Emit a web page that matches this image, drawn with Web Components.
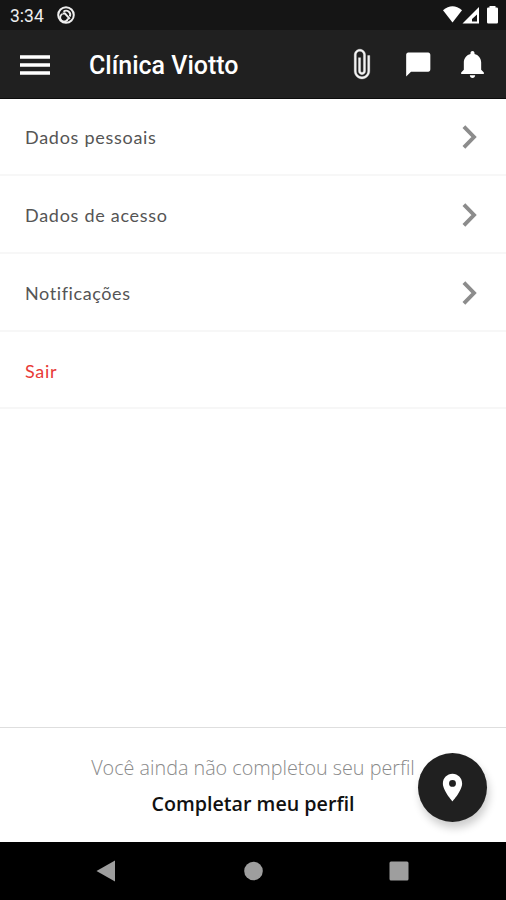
<!DOCTYPE html>
<html lang="pt-BR">
<head>
<meta charset="utf-8">
<title>Clínica Viotto</title>
<style>
  html, body {
    margin: 0;
    height: 100%;
    overflow: hidden;
  }
</style>
</head>
<body>
<profile-page></profile-page>
<script>
const define = (name, html) => {
  const template = document.createElement('template');
  template.innerHTML = html;
  window.customElements.define(name, class extends HTMLElement {
    constructor() {
      super();
      this.attachShadow({ mode: 'open' }).appendChild(template.content.cloneNode(true));
    }
  });
};

define('status-bar', `
<style>
  :host {
    display: flex;
    align-items: center;
    box-sizing: border-box;
    height: 30px;
    flex: none;
    padding: 0 8px 0 10px;
    background: #151515;
    color: #eee;
    font: 400 17.5px Roboto, sans-serif;
  }
  .time { flex: 1; display: flex; align-items: center; gap: 13px; }
  .time span { padding-top: 1px; }
  svg { display: block; }
</style>
<div class="time"><span>3:34</span>
  <svg width="18" height="18" viewBox="0 0 18 18" fill="none" stroke="#eee" stroke-width="2">
    <circle cx="9" cy="9" r="7.8"/>
    <path d="M5.200 8A4 4 0 1 0 11 12.500M6.500 5.800A4 4 0 0 1 12.800 10.500M5.500 7.500H8L12.800 12.800" stroke-width="1.900"/>
  </svg>
</div>
<svg width="55" height="18" viewBox="0 0 55 18" fill="#fff">
  <path d="M0 4.300Q9.500-4 19 4.300L9.500 16.500Z"/>
  <path fill-rule="evenodd" d="M19.500 17.500L36 1V17.500ZM29 15.500H34V8.500L29 13Z"/>
  <path d="M46.500 0h6v1.500h1.200A1.300 1.300 0 0 1 55 2.800v13.400a1.300 1.300 0 0 1-1.300 1.300h-8.400A1.300 1.300 0 0 1 44 16.200V2.800a1.300 1.300 0 0 1 1.300-1.300h1.200z"/>
</svg>`);

define('app-header', `
<style>
  :host {
    display: flex;
    align-items: center;
    box-sizing: border-box;
    height: 69px;
    flex: none;
    padding: 1px 17px 0 20px;
    background: #202020;
    color: #fff;
    border-bottom: 1px solid #0c0c0c;
  }
  h1 {
    flex: 1;
    margin: 0 0 0 39px;
    padding-top: 2px;
    font: 500 25px/30px Roboto, sans-serif;
  }
  svg { display: block; fill: #fff; }
  .actions { display: flex; align-items: center; gap: 23px; }
  .clip { margin: 0 2px 1px 0; stroke: #f2f2f2; stroke-width: 5; fill: #f2f2f2; }
</style>
<svg width="30" height="22" viewBox="0 0 30 22"><path d="M0 1.300h30v3.400H0zM0 9.300h30v3.400H0zM0 17.300h30v3.400H0z"/></svg>
<h1><slot></slot></h1>
<div class="actions">
  <svg class="clip" width="34" height="34" viewBox="0 0 512 512"><path d="M341.334 128v234.666C341.334 409.604 302.938 448 256 448c-46.937 0-85.333-38.396-85.333-85.334V117.334C170.667 87.469 194.135 64 224 64c29.864 0 53.333 23.469 53.333 53.334v245.333c0 11.729-9.605 21.333-21.334 21.333s-21.333-9.604-21.333-21.333V160h-32v202.667C202.667 392.531 226.135 416 256 416c29.865 0 53.334-23.469 53.334-53.333V117.334C309.334 70.401 270.938 32 224 32c-46.938 0-85.334 38.401-85.334 85.334v245.332C138.667 427.729 190.938 480 256 480c65.062 0 117.334-52.271 117.334-117.334V128h-32z"/></svg>
  <svg width="29" height="29" viewBox="0 0 24 24"><path d="M20 2H3.500C2.500 2 1.800 2.900 1.800 4v18l4-4H20c1.100 0 1.800-.9 1.800-2V4c0-1.100-.7-2-1.800-2z"/></svg>
  <svg width="33" height="33" viewBox="0 0 512 512"><path d="M256 464c22.779 0 41.411-18.719 41.411-41.600h-82.823c0 22.881 18.633 41.600 41.412 41.600zm134.589-124.800V224.800c0-63.440-44.516-117.518-103.530-131.041V79.200c0-17.682-14.078-31.200-31.059-31.200s-31.059 13.518-31.059 31.200v14.559c-59.015 13.523-103.530 67.601-103.530 131.041v114.400L80 380.800v20.800h352v-20.800l-41.411-41.600z"/></svg>
</div>`);

define('menu-item', `
<style>
  :host {
    display: flex;
    align-items: center;
    justify-content: space-between;
    box-sizing: border-box;
    height: 78px;
    padding: 2px 29px 0 25px;
    border-bottom: 2px solid #f7f7f7;
    color: #555;
    font: 400 18px/24px Lato, sans-serif;
    letter-spacing: var(--spacing, .72px);
  }
  :host(:first-child) { height: 77px; padding-top: 1px; }
  :host([danger]) { color: #e83a37; height: 77px; }
  :host([danger]) svg { display: none; }
  svg { display: block; fill: none; stroke: #8c8c8c; stroke-width: 3.900; }
</style>
<slot></slot>
<svg width="15" height="24" viewBox="0 0 15 24"><path d="M1.900 1.700L12 12L1.900 22.300"/></svg>`);

define('profile-notice', `
<style>
  :host {
    display: block;
    position: relative;
    box-sizing: border-box;
    height: 115px;
    flex: none;
    padding-top: 25px;
    border-top: 1px solid #dedede;
    text-align: center;
    font-family: "Open Sans", sans-serif;
    font-size: 19.750px;
    line-height: 30px;
  }
  .hint { color: #8a8a8a; font-weight: 300; }
  .action { margin-top: 6px; color: #111; font-weight: 600; font-size: 19.700px; }
  .fab {
    position: absolute;
    right: 19px;
    top: 25px;
    display: flex;
    align-items: center;
    justify-content: center;
    width: 69px;
    height: 69px;
    border-radius: 50%;
    background: #202020;
    box-shadow: 2px 6px 9px rgba(0, 0, 0, .2);
  }
</style>
<div class="hint"><slot name="hint"></slot></div>
<div class="action"><slot name="action"></slot></div>
<div class="fab">
  <svg width="33" height="33" viewBox="0 0 24 24" fill="#fff"><path d="M12 2C8.130 2 5 5.130 5 9c0 5.250 7 13 7 13s7-7.750 7-13c0-3.870-3.130-7-7-7zm0 9.500a2.500 2.500 0 0 1 0-5 2.500 2.500 0 0 1 0 5z"/></svg>
</div>`);

define('android-nav', `
<style>
  :host {
    display: flex;
    align-items: center;
    justify-content: space-between;
    box-sizing: border-box;
    height: 58px;
    flex: none;
    padding: 0 97px 0 96px;
    background: #000;
  }
  svg { display: block; fill: #9e9e9e; }
</style>
<svg width="20" height="22" viewBox="0 0 20 22"><path d="M.5 11L19 .5v21z"/></svg>
<svg width="20" height="20" viewBox="0 0 20 20"><circle cx="10.500" cy="10" r="9.300"/></svg>
<svg width="20" height="20" viewBox="0 0 20 20"><rect x=".5" y=".5" width="19" height="19" rx="1.500"/></svg>`);

define('profile-page', `
<style>
  :host {
    display: flex;
    flex-direction: column;
    height: 900px;
    background: #fff;
  }
  main { flex: 1; }
  .tight { --spacing: .6px; }
</style>
<status-bar></status-bar>
<app-header>Clínica Viotto</app-header>
<main>
  <menu-item>Dados pessoais</menu-item>
  <menu-item>Dados de acesso</menu-item>
  <menu-item class="tight">Notificações</menu-item>
  <menu-item danger>Sair</menu-item>
</main>
<profile-notice>
  <span slot="hint">Você ainda não completou seu perfil</span>
  <span slot="action">Completar meu perfil</span>
</profile-notice>
<android-nav></android-nav>`);
</script>
</body>
</html>
